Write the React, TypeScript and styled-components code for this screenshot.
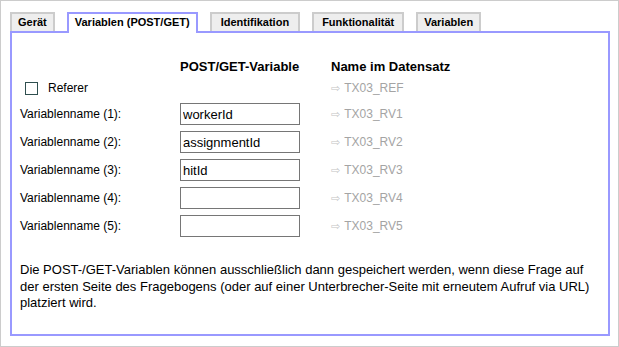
import styled, { createGlobalStyle, css } from "styled-components";

const GlobalStyle = createGlobalStyle`
  html, body {
    margin: 0;
    padding: 0;
    background: #fff;
  }
  body {
    font-family: "Liberation Sans", Arial, sans-serif;
    color: #000;
  }
`;

const Frame = styled.div`
  box-sizing: border-box;
  width: 619px;
  height: 347px;
  border: 1px solid #cccccc;
  padding: 11px 8px 10px 9px;
  display: flex;
  flex-direction: column;
`;

const TabBar = styled.div`
  display: flex;
  gap: 12px;
  height: 19px;
`;

const Tab = styled.div<{ $active?: boolean; $pad?: number }>`
  box-sizing: border-box;
  height: 19px;
  padding: 0 ${(p) => p.$pad ?? 6}px;
  border: 2px solid #cccccc;
  border-bottom: none;
  background: #eeeeee;
  font-size: 11px;
  font-weight: bold;
  line-height: 17px;
  white-space: nowrap;
  ${(p) =>
    p.$active &&
    css`
      position: relative;
      z-index: 1;
      height: 21px;
      margin-bottom: -2px;
      border-color: #9999ff;
      background: #fff;
    `}
`;

const Panel = styled.div`
  box-sizing: border-box;
  flex: 1;
  border: 2px solid #9999ff;
  padding: 23px 8px 0 8px;
`;

const Grid = styled.div`
  display: grid;
  grid-template-columns: 160px 151px 1fr;
  grid-template-rows: 20px 24px repeat(5, 28px);
  align-items: center;
`;

const HeadCell = styled.div`
  font-size: 13px;
  font-weight: bold;
`;

const Label = styled.div`
  font-size: 12px;
`;

const CheckRow = styled.label`
  display: flex;
  align-items: center;
  gap: 10px;
  padding-left: 5px;
  font-size: 12px;
`;

const Check = styled.input.attrs({ type: "checkbox" })`
  appearance: none;
  box-sizing: border-box;
  width: 13px;
  height: 13px;
  margin: 0;
  border: 1px solid #2f4f4f;
  background: #fff;
`;

const TextField = styled.input.attrs({ type: "text" })`
  box-sizing: border-box;
  width: 120px;
  height: 22px;
  margin: 0;
  padding: 0 2px;
  border: 1px solid #767676;
  font-family: "Liberation Sans", Arial, sans-serif;
  font-size: 13px;
  color: #000;
  outline: none;
`;

const DataName = styled.div`
  display: flex;
  align-items: center;
  gap: 4px;
  font-size: 12px;
  color: #a4a4a4;
`;

const Arrow = styled.span`
  font-family: "DejaVu Sans", sans-serif;
  font-size: 11px;
  color: #c4c4c4;
`;

const Note = styled.p`
  margin: 22px 0 0 0;
  font-size: 13px;
  line-height: 16.5px;
`;

const tabs = [
  { label: "Gerät" },
  { label: "Variablen (POST/GET)", active: true },
  { label: "Identifikation", pad: 9 },
  { label: "Funktionalität", pad: 8 },
  { label: "Variablen" },
];

const vars = [
  { n: 1, value: "workerId", field: "TX03_RV1" },
  { n: 2, value: "assignmentId", field: "TX03_RV2" },
  { n: 3, value: "hitId", field: "TX03_RV3" },
  { n: 4, value: "", field: "TX03_RV4" },
  { n: 5, value: "", field: "TX03_RV5" },
];

export default function App() {
  return (
    <>
      <GlobalStyle />
      <Frame>
        <TabBar>
          {tabs.map((t) => (
            <Tab key={t.label} $active={t.active} $pad={t.pad}>
              {t.label}
            </Tab>
          ))}
        </TabBar>
        <Panel>
          <Grid>
            <div />
            <HeadCell>POST/GET-Variable</HeadCell>
            <HeadCell>Name im Datensatz</HeadCell>

            <CheckRow>
              <Check />
              Referer
            </CheckRow>
            <div />
            <DataName>
              <Arrow>⇨</Arrow>TX03_REF
            </DataName>

            {vars.map((v) => (
              <>
                <Label key={`l${v.n}`}>Variablenname ({v.n}):</Label>
                <div key={`i${v.n}`}>
                  <TextField defaultValue={v.value} />
                </div>
                <DataName key={`d${v.n}`}>
                  <Arrow>⇨</Arrow>
                  {v.field}
                </DataName>
              </>
            ))}
          </Grid>
          <Note>
            Die POST-/GET-Variablen können ausschließlich dann gespeichert
            werden, wenn diese Frage auf der ersten Seite des Fragebogens (oder
            auf einer Unterbrecher-Seite mit erneutem Aufruf via URL) platziert
            wird.
          </Note>
        </Panel>
      </Frame>
    </>
  );
}
